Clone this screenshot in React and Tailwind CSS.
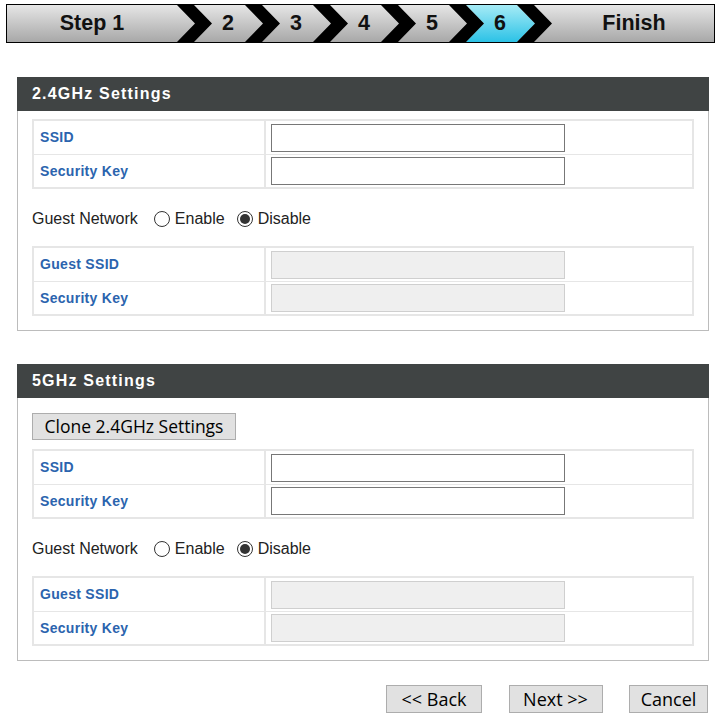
import React from "react";

const CHEVRONS = [0, 1, 2, 3, 4, 5].map((k) => 170 + 68 * k);

const chevron = (x) =>
  `${x},0 ${x + 17},0 ${x + 35},18.5 ${x + 17},37 ${x},37 ${x + 18},18.5`;

const cyanShape = (a, b) =>
  `${a + 17},0 ${b},0 ${b + 18},18.5 ${b},37 ${a + 17},37 ${a + 35},18.5`;

const StepBar = () => {
  const steps = ["2", "3", "4", "5", "6"];
  return (
    <div className="relative ml-[6px] mt-[4px] h-[39px] w-[709px] border border-black bg-gradient-to-b from-[#e6e6e6] to-[#a8a8a8]">
      <svg className="absolute left-0 top-0" width="707" height="37" viewBox="0 0 707 37">
        <defs>
          <linearGradient id="cy" x1="0" y1="0" x2="0" y2="1">
            <stop offset="0" stopColor="#a6ebf6" />
            <stop offset="1" stopColor="#2cc2e6" />
          </linearGradient>
        </defs>
        <polygon points={cyanShape(CHEVRONS[4], CHEVRONS[5])} fill="url(#cy)" />
        {CHEVRONS.map((x) => (
          <polygon key={x} points={chevron(x)} fill="#000" />
        ))}
      </svg>
      <div className="relative flex h-full items-center text-[21.5px] font-bold text-[#111]">
        <div className="w-[170px] text-center">Step 1</div>
        <div className="w-[17px]" />
        {steps.map((s) => (
          <div key={s} className="w-[68px] text-center">
            {s}
          </div>
        ))}
        <div className="flex-1 pl-[20px] text-center">Finish</div>
      </div>
    </div>
  );
};

const FieldTable = ({ rows, disabled }) => (
  <div className="border-2 border-[#e6e6e6]">
    {rows.map((label, i) => (
      <div
        key={label}
        className={`flex h-[33px] ${i > 0 ? "border-t border-[#e6e6e6]" : ""}`}
      >
        <div className="flex w-[232px] items-center border-r-2 border-[#e6e6e6] pl-[6px] text-[14px] font-bold tracking-[0.3px] text-[#2b64ae]">
          {label}
        </div>
        <div className="flex flex-1 items-center pl-[5px]">
          <input
            type="text"
            readOnly
            disabled={disabled}
            className={`h-[28px] w-[294px] border outline-none ${
              disabled ? "border-[#cfcfcf] bg-[#efefef]" : "border-[#777] bg-white"
            }`}
          />
        </div>
      </div>
    ))}
  </div>
);

const Radio = ({ checked, label }) => (
  <div className="flex items-center">
    <span className="flex h-[16px] w-[16px] items-center justify-center rounded-full border border-[#333] bg-white">
      {checked && <span className="h-[10px] w-[10px] rounded-full bg-[#333]" />}
    </span>
    <span className="ml-[5px]">{label}</span>
  </div>
);

const GuestRow = () => (
  <div className="flex h-[57px] items-center pt-[3px] text-[16px] text-[#222]">
    <span>Guest Network</span>
    <div className="ml-[16px] flex items-center gap-[12px]">
      <Radio label="Enable" />
      <Radio label="Disable" checked />
    </div>
  </div>
);

const Panel = ({ title, clone }) => (
  <div className="ml-[17px] w-[692px]">
    <div className="flex h-[34px] items-center bg-[#404444] pl-[15px] text-[16px] font-bold tracking-[1.2px] text-white">
      {title}
    </div>
    <div className="border-x border-b border-[#bcbcbc] px-[14px] pb-[14px] pt-[8px]">
      {clone && (
        <button className="mb-[9px] mt-[7px] h-[27px] w-[204px] border border-[#adadad] bg-[#e1e1e1] font-['Open_Sans',sans-serif] text-[17.5px] leading-none text-black">
          Clone 2.4GHz Settings
        </button>
      )}
      <FieldTable rows={["SSID", "Security Key"]} />
      <GuestRow />
      <FieldTable rows={["Guest SSID", "Security Key"]} disabled />
    </div>
  </div>
);

const Btn = ({ children, w }) => (
  <button
    className={`h-[28px] ${w} border border-[#adadad] bg-[#e1e1e1] font-['Open_Sans',sans-serif] text-[18px] leading-none text-black`}
  >
    {children}
  </button>
);

export default function App() {
  return (
    <div className="h-[716px] w-[724px] overflow-hidden bg-white font-['Liberation_Sans',Arial,sans-serif]">
      <StepBar />
      <div className="mt-[34px]">
        <Panel title="2.4GHz Settings" />
      </div>
      <div className="mt-[33px]">
        <Panel title="5GHz Settings" clone />
      </div>
      <div className="ml-[386px] mt-[24px] flex w-[322px] justify-between">
        <Btn w="w-[96px]">&lt;&lt; Back</Btn>
        <Btn w="w-[94px]">Next &gt;&gt;</Btn>
        <Btn w="w-[79px]">Cancel</Btn>
      </div>
    </div>
  );
}
